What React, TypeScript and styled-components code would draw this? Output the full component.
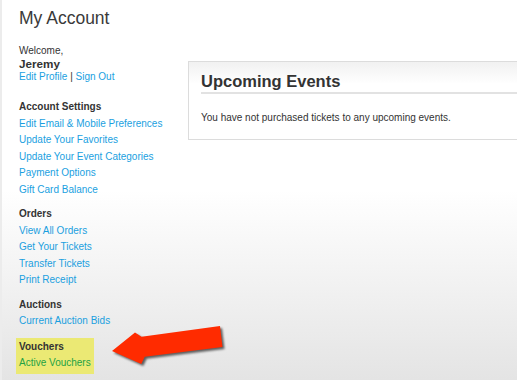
import React from 'react';
import styled, { createGlobalStyle } from 'styled-components';

const GlobalStyle = createGlobalStyle`
  html, body {
    margin: 0;
    padding: 0;
    overflow: hidden;
  }
  body {
    width: 517px;
    height: 380px;
    font-family: "Liberation Sans", Arial, sans-serif;
    background: linear-gradient(to bottom, #fff 0, #fff 190px, #e4e4e4 380px);
    border-left: 2px solid #ececec;
    box-sizing: border-box;
  }
`;

const Page = styled.div`
  position: relative;
  display: grid;
  grid-template-columns: 186px 1fr;
  height: 380px;
`;

const Sidebar = styled.aside`
  padding: 8px 0 0 17px;
  color: #333;
`;

const PageTitle = styled.h1`
  margin: 0;
  font-size: 17.5px;
  line-height: 20px;
  font-weight: normal;
  color: #3a3a3a;
`;

const Welcome = styled.div`
  margin-top: 16px;
  font-size: 10px;
  line-height: 13px;
`;

const UserName = styled.div`
  font-size: 11.7px;
  font-weight: bold;
  line-height: 13px;
`;

const Sep = styled.span`
  color: #333;
`;

const Link = styled.a<{ $tone?: string }>`
  color: ${p => p.$tone || '#1a9fdf'};
  text-decoration: none;
  font-size: 10px;
`;

const Section = styled.div<{ $highlight?: boolean; $first?: boolean }>`
  margin-top: ${p => (p.$first ? '16px' : '8px')};
  margin-left: ${p => (p.$highlight ? '-3px' : '0')};
  padding: ${p => (p.$highlight ? '1px 3px 2px' : '0')};
  width: ${p => (p.$highlight ? '72px' : 'auto')};
  background: ${p => (p.$highlight ? '#ebe974' : 'transparent')};
  display: flex;
  flex-direction: column;
  font-size: 10px;
  line-height: 16.5px;
`;

const SectionTitle = styled.div`
  font-weight: bold;
  color: #333;
`;

const Main = styled.main`
  padding-top: 61px;
  margin-right: -20px;
`;

const Card = styled.div`
  border: 1px solid #dcdcdc;
  background: linear-gradient(to bottom, #f1f1f1 0, #fff 22px);
  padding: 9px 13px 14px 12px;
`;

const CardTitle = styled.h2`
  margin: 0;
  font-size: 16.5px;
  line-height: 20px;
  font-weight: bold;
  color: #333;
  padding-bottom: 1px;
  border-bottom: 2px solid #e2e2e2;
`;

const CardText = styled.p`
  margin: 17px 0 0;
  font-size: 10px;
  line-height: 14px;
  color: #333;
`;

const Arrow = styled.svg`
  position: absolute;
  left: 100px;
  top: 320px;
  overflow: visible;
  filter: drop-shadow(2px 2px 1.2px rgba(0, 0, 0, 0.6));
`;

const sections = [
  {
    title: 'Account Settings',
    links: [
      'Edit Email & Mobile Preferences',
      'Update Your Favorites',
      'Update Your Event Categories',
      'Payment Options',
      'Gift Card Balance',
    ],
  },
  { title: 'Orders', links: ['View All Orders', 'Get Your Tickets', 'Transfer Tickets', 'Print Receipt'] },
  { title: 'Auctions', links: ['Current Auction Bids'] },
];

export default function App() {
  return (
    <>
      <GlobalStyle />
      <Page>
        <Sidebar>
          <PageTitle>My Account</PageTitle>
          <Welcome>
            <div>Welcome,</div>
            <UserName>Jeremy</UserName>
            <div>
              <Link href="#">Edit Profile</Link> <Sep>|</Sep> <Link href="#">Sign Out</Link>
            </div>
          </Welcome>
          {sections.map((s, i) => (
            <Section key={s.title} $first={i === 0}>
              <SectionTitle>{s.title}</SectionTitle>
              {s.links.map(l => (
                <Link key={l} href="#">
                  {l}
                </Link>
              ))}
            </Section>
          ))}
          <Section $highlight>
            <SectionTitle>Vouchers</SectionTitle>
            <Link href="#" $tone="#23a244">
              Active Vouchers
            </Link>
          </Section>
        </Sidebar>
        <Main>
          <Card>
            <CardTitle>Upcoming Events</CardTitle>
            <CardText>You have not purchased tickets to any upcoming events.</CardText>
          </Card>
        </Main>
        <Arrow width="130" height="55" viewBox="0 0 130 55">
          <polygon
            points="10,31 33,12.5 39.5,16.8 118,6 120.5,27 42.7,36.7 39.3,44"
            fill="#ff2b00"
            strokeLinejoin="round"
          />
        </Arrow>
      </Page>
    </>
  );
}
